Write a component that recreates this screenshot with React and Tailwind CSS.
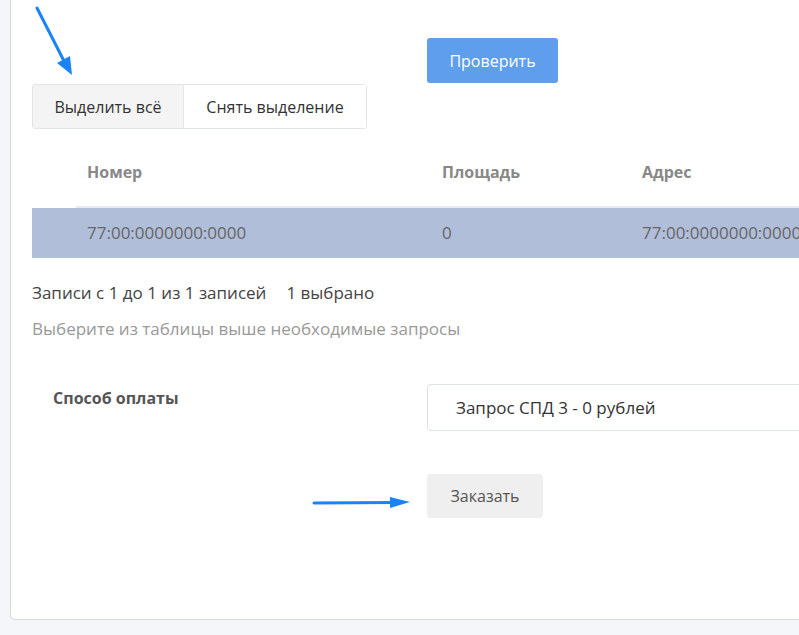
import React from "react";

export default function App() {
  return (
    <div className="relative w-[799px] h-[635px] overflow-hidden bg-[#f4f6f9]" style={{ fontFamily: "'Open Sans', 'Noto Sans', sans-serif" }}>
      <div className="ml-[10px] h-[620px] bg-white border-l border-b border-[#d3d9df] rounded-bl-[5px] pl-[21px] overflow-hidden">
        <div className="pt-[38px] pl-[395px]">
          <button className="h-[45px] w-[131px] rounded-[3px] bg-[#5f9eec] text-white text-[16px]">Проверить</button>
        </div>
        <div className="mt-px inline-flex h-[45px] border border-[#e1e4e8] rounded-[3px] text-[16px] text-[#333]">
          <button className="w-[151px] bg-[#f4f4f4] border-r border-[#e6e6e6]">Выделить всё</button>
          <button className="w-[182px] bg-white">Снять выделение</button>
        </div>
        <div className="mt-[22px] w-[900px] text-[17px]">
          <div className="flex h-[57px] font-bold text-[#888] text-[16px] leading-[24px]">
            <div className="w-[44px] h-full"></div>
            <div className="flex h-full flex-1 pt-[9px] border-b-2 border-[#e6e9ee]">
              <div className="w-[355px] pl-[11px]">Номер</div>
              <div className="w-[200px] pl-[11px]">Площадь</div>
              <div className="pl-[11px]">Адрес</div>
            </div>
          </div>
          <div className="flex h-[50px] items-center bg-[#b0bed9] text-[#666]">
            <div className="w-[44px]"></div>
            <div className="w-[355px] pl-[11px]">77:00:0000000:0000</div>
            <div className="w-[200px] pl-[11px]">0</div>
            <div className="pl-[11px]">77:00:0000000:0000</div>
          </div>
        </div>
        <div className="mt-[23px] text-[17px] leading-[24px] text-[#444]">
          Записи с 1 до 1 из 1 записей<span className="ml-[20px]">1 выбрано</span>
        </div>
        <div className="mt-[12px] text-[17px] leading-[24px] text-[#999]">Выберите из таблицы выше необходимые запросы</div>
        <div className="mt-[43px] flex">
          <div className="w-[395px] shrink-0 pl-[21px] pt-[2px] text-[16px] leading-[24px] font-bold text-[#555]">Способ оплаты</div>
          <div className="flex h-[47px] w-[500px] shrink-0 items-center rounded-[4px] border border-[#dbe2e8] pl-[28px] text-[17px] text-[#333]">Запрос СПД 3 - 0 рублей</div>
        </div>
        <div className="mt-[43px] pl-[395px]">
          <button className="h-[44px] w-[116px] rounded-[3px] bg-[#efefef] text-[16px] text-[#555]">Заказать</button>
        </div>
      </div>
      <svg className="pointer-events-none absolute left-0 top-0" width="799" height="635">
        <line x1="37" y1="8" x2="64" y2="61" stroke="#1a84f7" strokeWidth="3" strokeLinecap="round" />
        <polygon points="72,75 57,63 70,56" fill="#1a84f7" />
        <line x1="314" y1="503" x2="395" y2="502.5" stroke="#1a84f7" strokeWidth="3" strokeLinecap="round" />
        <polygon points="410,502 390,497 390,508" fill="#1a84f7" />
      </svg>
    </div>
  );
}
